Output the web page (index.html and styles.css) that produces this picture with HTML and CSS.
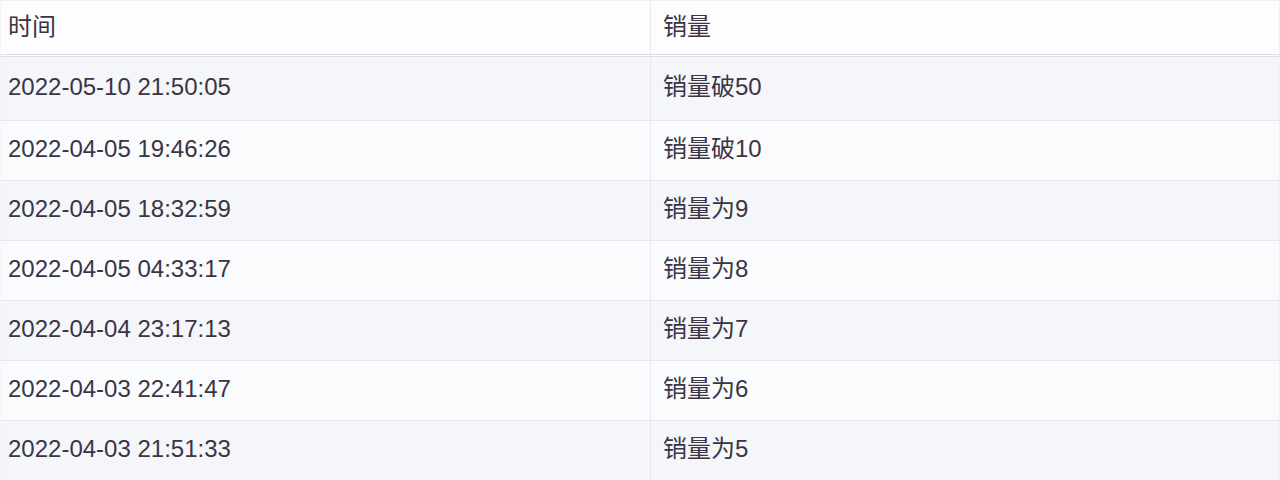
FILE: index.html
```html
<!DOCTYPE html>
<html lang="zh">
<head>
<meta charset="utf-8">
<link rel="stylesheet" href="styles.css">
</head>
<body>
<div class="table">
  <div class="row head">
    <div class="cell c1"><span class="txt">时间</span></div>
    <div class="cell c2"><span class="txt">销量</span></div>
  </div>
  <div class="row body first odd">
    <div class="cell c1"><span class="txt">2022-05-10 21:50:05</span></div>
    <div class="cell c2"><span class="txt">销量破50</span></div>
  </div>
  <div class="row body even">
    <div class="cell c1"><span class="txt">2022-04-05 19:46:26</span></div>
    <div class="cell c2"><span class="txt">销量破10</span></div>
  </div>
  <div class="row body odd">
    <div class="cell c1"><span class="txt">2022-04-05 18:32:59</span></div>
    <div class="cell c2"><span class="txt">销量为9</span></div>
  </div>
  <div class="row body even">
    <div class="cell c1"><span class="txt">2022-04-05 04:33:17</span></div>
    <div class="cell c2"><span class="txt">销量为8</span></div>
  </div>
  <div class="row body odd">
    <div class="cell c1"><span class="txt">2022-04-04 23:17:13</span></div>
    <div class="cell c2"><span class="txt">销量为7</span></div>
  </div>
  <div class="row body even">
    <div class="cell c1"><span class="txt">2022-04-03 22:41:47</span></div>
    <div class="cell c2"><span class="txt">销量为6</span></div>
  </div>
  <div class="row body odd">
    <div class="cell c1"><span class="txt">2022-04-03 21:51:33</span></div>
    <div class="cell c2"><span class="txt">销量为5</span></div>
  </div>
</div>
</body>
</html>
```

FILE: styles.css
```css
html, body {
  margin: 0;
  padding: 0;
  background: #ffffff;
}
body {
  font-family: "Liberation Sans", "Noto Sans CJK SC", sans-serif;
  font-size: 24px;
  line-height: 28px;
  color: #3a3445;
  overflow: hidden;
}
.table {
  width: 1278px;
  border-right: 1px solid #eef0f4;
  border-left: 1px solid #f4f5f8;
}
.row {
  display: flex;
  align-items: stretch;
}
.cell {
  display: flex;
  align-items: center;
  box-sizing: border-box;
}
.txt {
  display: block;
  height: 28px;
  line-height: 28px;
  white-space: nowrap;
}
.c1 {
  width: 650px;
  padding-left: 7px;
  border-right: 1px solid #e6e8ee;
}
.c2 {
  flex: 1;
  padding-left: 12px;
}
.head {
  height: 57px;
  box-sizing: border-box;
  background: #fdfdfe;
  border-top: 1px solid #eceef2;
  border-bottom: 3px double #dcdfe6;
}
.head .cell {
  padding-bottom: 2px;
}
.body {
  height: 60px;
  box-sizing: border-box;
  border-bottom: 1px solid #e4e7ec;
}
.body .cell {
  padding-bottom: 3px;
}
.body.first {
  height: 64px;
}
.odd {
  background: #f5f6f9;
}
.even {
  background: #fafbfd;
}
```
